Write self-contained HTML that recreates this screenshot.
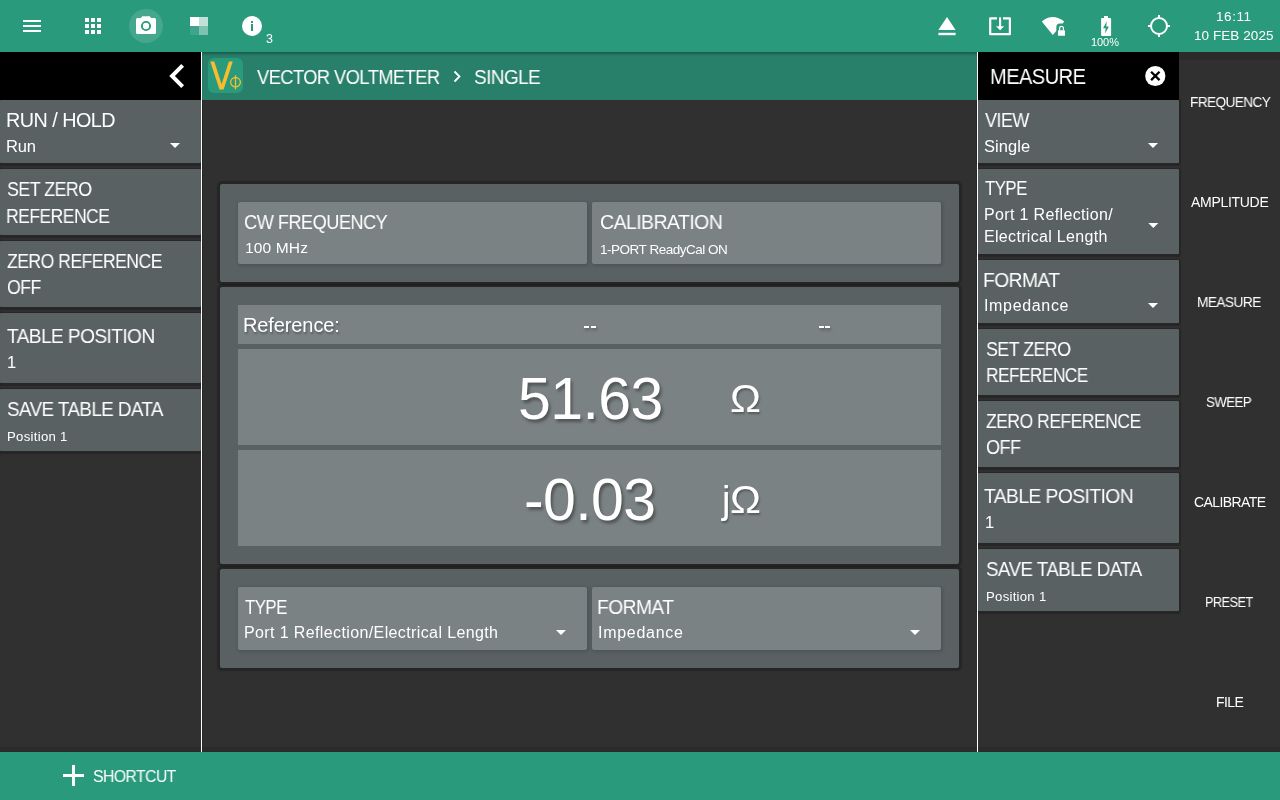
<!DOCTYPE html>
<html><head><meta charset="utf-8">
<style>
html,body{margin:0;padding:0;}
body{width:1280px;height:800px;overflow:hidden;position:relative;background:#303030;font-family:"Liberation Sans",sans-serif;}
.t{position:absolute;line-height:1;white-space:nowrap;will-change:transform;}
.r{position:absolute;}
svg{position:absolute;overflow:visible;}
.btn{position:absolute;background:#5a6163;border-radius:2px;box-shadow:0 1px 1px 2px rgba(0,0,0,0.2);}
.card{position:absolute;background:#7b8283;border-radius:2px;box-shadow:1px 1px 3px 1px rgba(20,30,50,0.18);}
.ocard{position:absolute;background:#5a6163;border-radius:2px;box-shadow:0 0 1px 3px rgba(0,0,0,0.22);}
.ts{text-shadow:1px 2px 2px rgba(0,0,0,0.35);}
</style></head><body>
<div class="r" style="left:0px;top:0px;width:1280px;height:52px;background:#2a9a7c;"></div>
<div class="r" style="left:202px;top:52px;width:775px;height:48px;background:#28806b;box-shadow:inset 0 3px 3px -1px rgba(0,0,0,0.3);"></div>
<div class="r" style="left:0px;top:52px;width:201px;height:48px;background:#000;"></div>
<div class="r" style="left:978px;top:52px;width:201px;height:48px;background:#000;"></div>
<div class="r" style="left:1179px;top:52px;width:101px;height:8px;background:rgba(0,0,0,0.1);"></div>
<div class="r" style="left:0px;top:747px;width:1280px;height:5px;background:rgba(0,0,0,0.1);"></div>
<div class="r" style="left:0px;top:752px;width:1280px;height:48px;background:#2a9a7c;"></div>
<div class="r" style="left:23px;top:20px;width:18px;height:2px;background:#fff;"></div>
<div class="r" style="left:23px;top:25px;width:18px;height:2px;background:#fff;"></div>
<div class="r" style="left:23px;top:30px;width:18px;height:2px;background:#fff;"></div>
<div class="r" style="left:85px;top:18px;width:4px;height:4px;background:#fff;"></div>
<div class="r" style="left:85px;top:24px;width:4px;height:4px;background:#fff;"></div>
<div class="r" style="left:85px;top:30px;width:4px;height:4px;background:#fff;"></div>
<div class="r" style="left:91px;top:18px;width:4px;height:4px;background:#fff;"></div>
<div class="r" style="left:91px;top:24px;width:4px;height:4px;background:#fff;"></div>
<div class="r" style="left:91px;top:30px;width:4px;height:4px;background:#fff;"></div>
<div class="r" style="left:97px;top:18px;width:4px;height:4px;background:#fff;"></div>
<div class="r" style="left:97px;top:24px;width:4px;height:4px;background:#fff;"></div>
<div class="r" style="left:97px;top:30px;width:4px;height:4px;background:#fff;"></div>
<div class="r" style="left:129px;top:9px;width:34px;height:34px;background:rgba(255,255,255,0.13);border-radius:50%;"></div>
<svg style="left:0;top:0" width="1280" height="52"><path d="M137.5 18h3.5l1.2-1.8h7.6l1.2 1.8h3.5a1.5 1.5 0 0 1 1.5 1.5v13a1.5 1.5 0 0 1-1.5 1.5h-17a1.5 1.5 0 0 1-1.5-1.5v-13a1.5 1.5 0 0 1 1.5-1.5z" fill="#fff"/><circle cx="146" cy="26" r="4.1" fill="none" stroke="#2a9a7c" stroke-width="1.9"/></svg><div class="r" style="left:190px;top:17px;width:9px;height:9px;background:#fff;"></div>
<div class="r" style="left:199px;top:17px;width:9px;height:9px;background:rgba(255,255,255,0.7);"></div>
<div class="r" style="left:190px;top:26px;width:9px;height:9px;background:rgba(255,255,255,0.1);"></div>
<div class="r" style="left:199px;top:26px;width:9px;height:9px;background:rgba(255,255,255,0.4);"></div>
<div class="r" style="left:242px;top:16px;width:20px;height:20px;background:#fff;border-radius:50%;"></div>
<div class="r" style="left:251px;top:21px;width:2px;height:2px;background:#2a9a7c;"></div>
<div class="r" style="left:251px;top:24px;width:2px;height:7px;background:#2a9a7c;"></div>
<div class="t" style="left:265.8px;top:33.22px;font-size:12.5px;color:#fff;letter-spacing:0.6px;">3</div>
<svg style="left:0;top:0" width="1280" height="52"><path d="M947 17L955.6 30H938.4Z" fill="#fff"/><rect x="938.4" y="32.8" width="17.2" height="2.4" fill="#fff"/><path d="M997 18.4H990.2V34.2H1009.9V18.4H1003" fill="none" stroke="#fff" stroke-width="2.2" stroke-linejoin="round"/><path d="M1000.1 17.3V27" stroke="#fff" stroke-width="2.1"/><path d="M996 26.2H1004.2L1000.1 30.2Z" fill="#fff"/><path d="M1041.8 21.4Q1053 12.6 1064.2 21.6L1062.7 23.4H1059.8Q1056.3 23.6 1056.3 27.2V31L1052.8 35Z" fill="#fff"/><rect x="1058" y="30.2" width="7" height="5.6" rx="0.6" fill="#fff"/><path d="M1059.6 30.4V28.2A1.9 1.9 0 0 1 1063.4 28.2V30.4" fill="none" stroke="#fff" stroke-width="1.2"/><rect x="1104" y="16" width="4" height="3" fill="#fff"/><rect x="1101.1" y="18.1" width="10" height="17.8" rx="0.9" fill="#fff"/><path d="M1106.7 21.2L1103.1 28.2H1105.6L1105.1 33.6L1108.9 26.5H1106.3Z" fill="#2a9a7c"/><circle cx="1159" cy="26" r="8" fill="none" stroke="#fff" stroke-width="2"/><path d="M1159 15v3M1159 34v3M1148 26h3M1167 26h3" stroke="#fff" stroke-width="2"/></svg><div class="t" style="left:1091.3px;top:37.29px;font-size:11px;color:#fff;letter-spacing:-0.067px;">100%</div>
<div class="t" style="left:1216.0px;top:9.57px;font-size:13.5px;color:#fff;letter-spacing:0.575px;">16:11</div>
<div class="t" style="left:1194.3px;top:29.17px;font-size:13.5px;color:#fff;letter-spacing:0.07px;">10 FEB 2025</div>
<svg style="left:0;top:0" width="1280" height="100"><path transform="translate(153.25 52) scale(2)" d="M15.41 7.41L14 6l-6 6 6 6 1.41-1.41L10.83 12z" fill="#fff"/></svg><div class="r" style="left:208px;top:58px;width:35px;height:35px;background:#2a9a7c;border-radius:6px;"></div>
<svg style="left:0;top:0" width="1280" height="100"><path d="M210.3 61.5H214.3L221.6 84.2L228.9 61.5H232.8L223.6 89.4H219.5Z" fill="#f7bd2f"/><ellipse cx="235.5" cy="82.2" rx="4.9" ry="4.7" fill="none" stroke="#f7bd2f" stroke-width="1.3"/><path d="M235.5 75.2v14.2" stroke="#f7bd2f" stroke-width="1.3"/></svg><div class="t" style="left:256.6px;top:68.19px;font-size:19.5px;color:#fff;letter-spacing:-0.6px;transform:scaleX(0.9387);transform-origin:0 0;">VECTOR VOLTMETER</div>
<svg style="left:0;top:0" width="1280" height="100"><path d="M454.5 71.5L459.5 76.5L454.5 81.5" fill="none" stroke="#fff" stroke-width="1.8"/></svg><div class="t" style="left:474.43px;top:68.19px;font-size:19.5px;color:#fff;letter-spacing:-0.6px;transform:scaleX(0.9731);transform-origin:0 0;">SINGLE</div>
<div class="t" style="left:989.74px;top:65.10px;font-size:22.8px;color:#fff;letter-spacing:-0.6px;transform:scaleX(0.8788);transform-origin:0 0;">MEASURE</div>
<svg style="left:0;top:0" width="1280" height="100"><circle cx="1155.3" cy="76" r="10.1" fill="#fff"/><path d="M1151.1 71.7L1159.5 80.1M1159.5 71.7L1151.1 80.1" stroke="#000" stroke-width="2.3"/></svg><div class="btn" style="left:0px;top:100px;width:201px;height:63px;border-radius:1px;"></div>
<div class="t" style="left:5.5px;top:110.64px;font-size:19.8px;color:#fff;letter-spacing:-0.522px;">RUN / HOLD</div>
<div class="t" style="left:6.0px;top:137.63px;font-size:16.5px;color:#fff;letter-spacing:-0.15px;">Run</div>
<svg style="left:0;top:0" width="1" height="1"><path d="M170 143h10l-5.0 5z" fill="#fff"/></svg>
<div class="btn" style="left:0px;top:169px;width:201px;height:66px;border-radius:1px;"></div>
<div class="t" style="left:7.35px;top:179.74px;font-size:19.8px;color:#fff;letter-spacing:-0.6px;transform:scaleX(0.9014);transform-origin:0 0;">SET ZERO</div>
<div class="t" style="left:6.48px;top:206.74px;font-size:19.8px;color:#fff;letter-spacing:-0.6px;transform:scaleX(0.8866);transform-origin:0 0;">REFERENCE</div>
<div class="btn" style="left:0px;top:241px;width:201px;height:66px;border-radius:1px;"></div>
<div class="t" style="left:7.36px;top:251.74px;font-size:19.8px;color:#fff;letter-spacing:-0.6px;transform:scaleX(0.89);transform-origin:0 0;">ZERO REFERENCE</div>
<div class="t" style="left:7.35px;top:277.74px;font-size:19.8px;color:#fff;letter-spacing:-0.6px;transform:scaleX(0.8954);transform-origin:0 0;">OFF</div>
<div class="btn" style="left:0px;top:313px;width:201px;height:70px;border-radius:1px;"></div>
<div class="t" style="left:6.75px;top:327.34px;font-size:19.8px;color:#fff;letter-spacing:-0.6px;transform:scaleX(0.9655);transform-origin:0 0;">TABLE POSITION</div>
<div class="t" style="left:6.5px;top:354.03px;font-size:16.5px;color:#fff;letter-spacing:0.0px;">1</div>
<div class="btn" style="left:0px;top:389px;width:201px;height:62px;border-radius:1px;"></div>
<div class="t" style="left:7.3px;top:399.74px;font-size:19.8px;color:#fff;letter-spacing:-0.6px;transform:scaleX(0.9514);transform-origin:0 0;">SAVE TABLE DATA</div>
<div class="t" style="left:7.25px;top:429.83px;font-size:13.2px;color:#fff;letter-spacing:0.278px;">Position 1</div>
<div class="btn" style="left:978px;top:100px;width:201px;height:63px;border-radius:1px;"></div>
<div class="t" style="left:984.9px;top:110.54px;font-size:19.8px;color:#fff;letter-spacing:-0.6px;transform:scaleX(0.9106);transform-origin:0 0;">VIEW</div>
<div class="t" style="left:983.9px;top:137.83px;font-size:16.5px;color:#fff;letter-spacing:0.08px;">Single</div>
<svg style="left:0;top:0" width="1" height="1"><path d="M1148 143h10l-5.0 5z" fill="#fff"/></svg>
<div class="btn" style="left:978px;top:169px;width:201px;height:85px;border-radius:1px;"></div>
<div class="t" style="left:985.25px;top:179.44px;font-size:19.8px;color:#fff;letter-spacing:-0.6px;transform:scaleX(0.8486);transform-origin:0 0;">TYPE</div>
<div class="t" style="left:984.0px;top:206.56px;font-size:16px;color:#fff;letter-spacing:0.353px;">Port 1 Reflection/</div>
<div class="t" style="left:984.0px;top:229.26px;font-size:16px;color:#fff;letter-spacing:0.319px;">Electrical Length</div>
<svg style="left:0;top:0" width="1" height="1"><path d="M1148.3 223h10l-5.0 5z" fill="#fff"/></svg>
<div class="btn" style="left:978px;top:260px;width:201px;height:63px;border-radius:1px;"></div>
<div class="t" style="left:983.05px;top:270.64px;font-size:19.8px;color:#fff;letter-spacing:-0.6px;transform:scaleX(0.974);transform-origin:0 0;">FORMAT</div>
<div class="t" style="left:984.0px;top:298.06px;font-size:16px;color:#fff;letter-spacing:0.662px;">Impedance</div>
<svg style="left:0;top:0" width="1" height="1"><path d="M1148 303h10l-5.0 5z" fill="#fff"/></svg>
<div class="btn" style="left:978px;top:329px;width:201px;height:66px;border-radius:1px;"></div>
<div class="t" style="left:985.7px;top:339.64px;font-size:19.8px;color:#fff;letter-spacing:-0.6px;transform:scaleX(0.9009);transform-origin:0 0;">SET ZERO</div>
<div class="t" style="left:985.95px;top:366.24px;font-size:19.8px;color:#fff;letter-spacing:-0.6px;transform:scaleX(0.873);transform-origin:0 0;">REFERENCE</div>
<div class="btn" style="left:978px;top:401px;width:201px;height:66px;border-radius:1px;"></div>
<div class="t" style="left:985.71px;top:411.84px;font-size:19.8px;color:#fff;letter-spacing:-0.6px;transform:scaleX(0.8886);transform-origin:0 0;">ZERO REFERENCE</div>
<div class="t" style="left:985.69px;top:438.44px;font-size:19.8px;color:#fff;letter-spacing:-0.6px;transform:scaleX(0.913);transform-origin:0 0;">OFF</div>
<div class="btn" style="left:978px;top:473px;width:201px;height:70px;border-radius:1px;"></div>
<div class="t" style="left:984.25px;top:487.49px;font-size:19.8px;color:#fff;letter-spacing:-0.6px;transform:scaleX(0.9754);transform-origin:0 0;">TABLE POSITION</div>
<div class="t" style="left:984.8px;top:514.43px;font-size:16.5px;color:#fff;letter-spacing:0.0px;">1</div>
<div class="btn" style="left:978px;top:549px;width:201px;height:62px;border-radius:1px;"></div>
<div class="t" style="left:985.65px;top:559.54px;font-size:19.8px;color:#fff;letter-spacing:-0.6px;transform:scaleX(0.9499);transform-origin:0 0;">SAVE TABLE DATA</div>
<div class="t" style="left:985.6px;top:590.08px;font-size:13.2px;color:#fff;letter-spacing:0.256px;">Position 1</div>
<div class="t" style="left:1189.53px;top:94.95px;font-size:14px;color:#fff;letter-spacing:-0.6px;transform:scaleX(0.9729);transform-origin:0 0;">FREQUENCY</div>
<div class="t" style="left:1191.0px;top:195.25px;font-size:14px;color:#fff;letter-spacing:-0.3px;">AMPLITUDE</div>
<div class="t" style="left:1197.22px;top:295.25px;font-size:14px;color:#fff;letter-spacing:-0.6px;transform:scaleX(0.9798);transform-origin:0 0;">MEASURE</div>
<div class="t" style="left:1206.35px;top:395.25px;font-size:14px;color:#fff;letter-spacing:-0.6px;transform:scaleX(0.9485);transform-origin:0 0;">SWEEP</div>
<div class="t" style="left:1193.6px;top:495.25px;font-size:14px;color:#fff;letter-spacing:-0.587px;">CALIBRATE</div>
<div class="t" style="left:1205.39px;top:595.25px;font-size:14px;color:#fff;letter-spacing:-0.6px;transform:scaleX(0.9077);transform-origin:0 0;">PRESET</div>
<div class="t" style="left:1215.61px;top:695.25px;font-size:14px;color:#fff;letter-spacing:-0.6px;transform:scaleX(0.9924);transform-origin:0 0;">FILE</div>
<div class="ocard" style="left:220px;top:184px;width:739px;height:98px"></div>
<div class="card" style="left:238px;top:202px;width:349px;height:62px"></div>
<div class="card" style="left:592px;top:202px;width:349px;height:62px"></div>
<div class="t" style="left:244.08px;top:212.94px;font-size:19.8px;color:#fff;letter-spacing:-0.6px;transform:scaleX(0.921);transform-origin:0 0;">CW FREQUENCY</div>
<div class="t" style="left:244.8px;top:239.58px;font-size:15.5px;color:#fff;letter-spacing:0.158px;">100 MHz</div>
<div class="t" style="left:600.01px;top:212.94px;font-size:19.8px;color:#fff;letter-spacing:-0.6px;transform:scaleX(0.9869);transform-origin:0 0;">CALIBRATION</div>
<div class="t" style="left:600.4px;top:242.77px;font-size:13.5px;color:#fff;letter-spacing:-0.482px;">1-PORT ReadyCal ON</div>
<div class="ocard" style="left:220px;top:287px;width:739px;height:277px"></div>
<div class="r" style="left:238px;top:305px;width:703px;height:39px;background:#7b8283;"></div>
<div class="r" style="left:238px;top:349px;width:703px;height:96px;background:#7b8283;"></div>
<div class="r" style="left:238px;top:450px;width:703px;height:96px;background:#7b8283;"></div>
<div class="t" style="left:243.0px;top:314.97px;font-size:20px;color:#fff;letter-spacing:-0.111px;text-shadow:1px 2px 2px rgba(0,0,0,0.3);">Reference:</div>
<div class="r" style="left:584px;top:326px;width:5px;height:2px;background:#fff;box-shadow:1px 2px 3px rgba(0,0,0,0.3);"></div>
<div class="r" style="left:590.5px;top:326px;width:5px;height:2px;background:#fff;box-shadow:1px 2px 3px rgba(0,0,0,0.3);"></div>
<div class="r" style="left:818.6px;top:326px;width:5px;height:2px;background:#fff;box-shadow:1px 2px 3px rgba(0,0,0,0.3);"></div>
<div class="r" style="left:825px;top:326px;width:5px;height:2px;background:#fff;box-shadow:1px 2px 3px rgba(0,0,0,0.3);"></div>
<div class="t" style="left:518px;top:369.56px;font-size:59px;color:#fff;letter-spacing:-0.6px;text-shadow:2px 3px 3px rgba(0,0,0,0.35);">51.63</div>
<div class="t" style="left:730.2px;top:380.33px;font-size:38px;color:#fff;letter-spacing:0px;text-shadow:1px 2px 2px rgba(0,0,0,0.3);transform:scaleX(1.09);transform-origin:0 0;">&#937;</div>
<div class="t" style="left:524px;top:470.56px;font-size:59px;color:#fff;letter-spacing:-0.6px;text-shadow:2px 3px 3px rgba(0,0,0,0.35);">-0.03</div>
<div class="t" style="left:721.5px;top:480.63px;font-size:38px;color:#fff;letter-spacing:0px;text-shadow:1px 2px 2px rgba(0,0,0,0.3);">j</div>
<div class="t" style="left:730.2px;top:480.63px;font-size:38px;color:#fff;letter-spacing:0px;text-shadow:1px 2px 2px rgba(0,0,0,0.3);transform:scaleX(1.09);transform-origin:0 0;">&#937;</div>
<div class="ocard" style="left:220px;top:569px;width:739px;height:99px"></div>
<div class="card" style="left:238px;top:587px;width:349px;height:63px"></div>
<div class="card" style="left:592px;top:587px;width:349px;height:63px"></div>
<div class="t" style="left:245.0px;top:598.04px;font-size:19.8px;color:#fff;letter-spacing:-0.6px;transform:scaleX(0.8486);transform-origin:0 0;">TYPE</div>
<div class="t" style="left:244.0px;top:624.86px;font-size:16px;color:#fff;letter-spacing:0.382px;">Port 1 Reflection/Electrical Length</div>
<svg style="left:0;top:0" width="1" height="1"><path d="M556 630h10l-5.0 5z" fill="#fff"/></svg>
<div class="t" style="left:596.8px;top:597.74px;font-size:19.8px;color:#fff;letter-spacing:-0.6px;transform:scaleX(0.974);transform-origin:0 0;">FORMAT</div>
<div class="t" style="left:597.75px;top:625.46px;font-size:16px;color:#fff;letter-spacing:0.719px;">Impedance</div>
<svg style="left:0;top:0" width="1" height="1"><path d="M910 630h10l-5.0 5z" fill="#fff"/></svg>
<svg style="left:0;top:0" width="1280" height="800"><path d="M73.5 765v21M63 775.5h21" stroke="#fff" stroke-width="3"/></svg><div class="t" style="left:92.61px;top:769.36px;font-size:16px;color:#fff;letter-spacing:-0.6px;transform:scaleX(0.9879);transform-origin:0 0;">SHORTCUT</div>
<div class="r" style="left:201px;top:52px;width:1px;height:700px;background:#fff;"></div>
<div class="r" style="left:202px;top:100px;width:1px;height:652px;background:#272727;"></div>
<div class="r" style="left:977px;top:52px;width:1px;height:700px;background:#fff;"></div>
</body></html>
